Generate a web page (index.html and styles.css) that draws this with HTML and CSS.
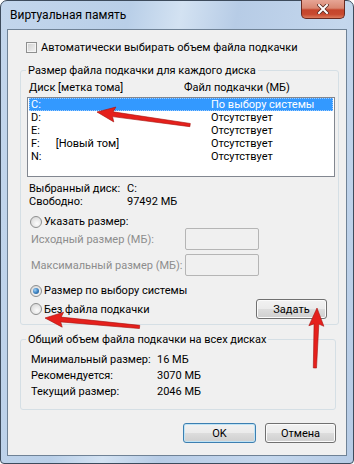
FILE: index.html
```html
<!DOCTYPE html>
<html lang="ru">
<head>
    <meta charset="UTF-8">
    <title>Виртуальная память</title>
    <link rel="stylesheet" href="styles.css">
</head>
<body>
    <div class="stage">
        <div class="window">
            <div class="titlebar">
                <span class="title">Виртуальная память</span>
                <span class="close">
                    <svg width="12" height="10" viewBox="0 0 12 10">
                        <path d="M2 1 L10 9 M10 1 L2 9" stroke="#5a2a22" stroke-width="3.6" stroke-linecap="square"/>
                        <path d="M2 1 L10 9 M10 1 L2 9" stroke="#fff" stroke-width="2" stroke-linecap="square"/>
                    </svg>
                </span>
            </div>
            <div class="client">
                <div class="check-row"><span class="checkbox"></span>Автоматически выбирать объем файла подкачки</div>

                <fieldset class="group group-drives">
                    <legend>Размер файла подкачки для каждого диска</legend>
                    <div class="list-head">
                        <span class="col-disk">Диск [метка тома]</span>
                        <span>Файл подкачки (МБ)</span>
                    </div>
                    <div class="listbox">
                        <div class="row selected"><span class="c-disk">C:</span><span>По выбору системы</span></div>
                        <div class="row"><span class="c-disk">D:</span><span>Отсутствует</span></div>
                        <div class="row"><span class="c-disk">E:</span><span>Отсутствует</span></div>
                        <div class="row"><span class="c-disk">F:<span class="label">[Новый том]</span></span><span>Отсутствует</span></div>
                        <div class="row"><span class="c-disk">N:</span><span>Отсутствует</span></div>
                    </div>
                    <div class="info">
                        <div class="info-row"><span class="info-label">Выбранный диск:</span><span>C:</span></div>
                        <div class="info-row"><span class="info-label">Свободно:</span><span>97492 МБ</span></div>
                    </div>
                    <div class="radio-row first"><span class="radio"></span>Указать размер:</div>
                    <div class="size-row"><span class="size-label">Исходный размер (МБ):</span><span class="textbox"></span></div>
                    <div class="size-row"><span class="size-label">Максимальный размер (МБ):</span><span class="textbox"></span></div>
                    <div class="radio-row system"><span class="radio checked"></span>Размер по выбору системы</div>
                    <div class="set-row">
                        <div class="radio-row"><span class="radio"></span>Без файла подкачки</div>
                        <button class="btn btn-set">Задать</button>
                    </div>
                </fieldset>

                <fieldset class="group group-total">
                    <legend>Общий объем файла подкачки на всех дисках</legend>
                    <div class="total-row"><span class="total-label">Минимальный размер:</span><span>16 МБ</span></div>
                    <div class="total-row"><span class="total-label">Рекомендуется:</span><span>3070 МБ</span></div>
                    <div class="total-row"><span class="total-label">Текущий размер:</span><span>2046 МБ</span></div>
                </fieldset>

                <div class="buttons">
                    <button class="btn btn-ok">OK</button>
                    <button class="btn btn-cancel">Отмена</button>
                </div>
            </div>
        </div>

        <svg class="arrows" width="354" height="464" viewBox="0 0 354 464">
            <polygon class="arrow" transform="translate(97 112) rotate(188)"
                     points="-94,-1.6 -16,-2.4 -18,-7.5 0,0 -18,7.5 -16,2.4 -94,1.6"/>
            <polygon class="arrow" transform="translate(45 318) rotate(185.4)"
                     points="-95,-1.6 -16,-2.4 -18,-7.5 0,0 -18,7.5 -16,2.4 -95,1.6"/>
            <polygon class="arrow" transform="translate(317 308) rotate(-88)"
                     points="-60,-1.6 -16,-2.4 -18,-7.5 0,0 -18,7.5 -16,2.4 -60,1.6"/>
        </svg>
    </div>
</body>
</html>
```

FILE: styles.css
```css
* {
    box-sizing: border-box;
}
body {
    margin: 0;
    font-family: Roboto, "Noto Sans", sans-serif;
    font-size: 11px;
    color: #000;
    white-space: nowrap;
}
.stage {
    position: relative;
    width: 354px;
    height: 464px;
}
.window {
    width: 354px;
    height: 464px;
    border: 1px solid #3d4b5c;
    border-radius: 7px 7px 4px 4px;
    background: linear-gradient(100deg, #c3d6ec 0%, #b9cfe8 30%, #d3e2f2 42%, #b7cce6 55%, #c4d7ed 80%, #b6cbe5 100%);
}
.titlebar {
    height: 28px;
    display: flex;
    justify-content: space-between;
    align-items: flex-start;
    padding: 0 8px 0 9px;
}
.title {
    line-height: 28px;
    font-size: 12px;
}
.close {
    width: 44px;
    height: 19px;
    margin-top: -1px;
    border: 1px solid #6a2a20;
    border-top: none;
    border-radius: 0 0 5px 5px;
    background: linear-gradient(#e6a595 0%, #d98772 45%, #c5452c 55%, #c84a30 80%, #dc7a5c 100%);
    display: flex;
    align-items: center;
    justify-content: center;
}
.client {
    margin: 0 6px;
    height: 427px;
    border: 1px solid #6f8296;
    background: #f0f0f0;
}
.check-row {
    margin-top: 11px;
    height: 13px;
    padding-left: 18px;
    display: flex;
    align-items: center;
    gap: 4px;
    line-height: 13px;
}
.checkbox {
    flex-shrink: 0;
    width: 11px;
    height: 11px;
    border: 1px solid #8e8f8f;
    background: linear-gradient(135deg, #cfcfcf, #f4f4f4);
    box-shadow: inset 0 0 0 1px #f4f4f4;
}
.group {
    margin: 10px 7px 0 12px;
    padding: 0;
    border: 1px solid #d5dfe5;
    border-radius: 3px;
    min-width: 0;
}
.group legend {
    margin-left: 5px;
    padding: 0 2px;
    line-height: 13px;
}
.list-head {
    margin-top: 4px;
    padding-left: 8px;
    line-height: 13px;
    display: flex;
}
.col-disk {
    width: 155px;
}
.listbox {
    margin: 3px 0 0 6px;
    width: 308px;
    height: 80px;
    border: 1px solid #828790;
    background: #fff;
}
.row {
    height: 13px;
    line-height: 13px;
    padding-left: 3px;
    display: flex;
}
.row.selected {
    margin: 0 1px;
    padding-left: 2px;
    background: #3399ff;
    color: #fff;
    outline: 1px dotted #9fccff;
    outline-offset: -1px;
}
.c-disk {
    width: 180px;
}
.label {
    margin-left: 16px;
}
.info {
    margin-top: 5px;
    padding-left: 8px;
}
.info-row {
    line-height: 13px;
    display: flex;
}
.info-label {
    width: 98px;
}
.radio-row {
    height: 13px;
    padding-left: 9px;
    display: flex;
    align-items: center;
    gap: 2px;
    line-height: 13px;
}
.radio-row.first {
    margin-top: 7px;
}
.radio-row.system {
    margin-top: 8px;
}
.radio {
    flex-shrink: 0;
    width: 12px;
    height: 12px;
    border: 1px solid #8e8f8f;
    border-radius: 50%;
    background: radial-gradient(circle at 60% 65%, #fcfcfc 0%, #e2e2e2 60%, #cfcfcf 100%);
    display: flex;
    align-items: center;
    justify-content: center;
}
.radio.checked::after {
    content: "";
    width: 6px;
    height: 6px;
    border-radius: 50%;
    background: radial-gradient(circle at 35% 35%, #9fd0f5 0%, #3d83c2 50%, #1c4d80 100%);
}
.size-row {
    height: 22px;
    margin-bottom: 4px;
    padding-left: 10px;
    display: flex;
    align-items: center;
    color: #8d8d8d;
}
.size-label {
    width: 154px;
    flex-shrink: 0;
}
.textbox {
    flex-shrink: 0;
    width: 74px;
    height: 22px;
    border: 1px solid #b5b5b5;
    border-radius: 2px;
    background: #f0f0f0;
}
.set-row {
    margin-top: 2px;
    height: 20px;
    padding-right: 11px;
    margin-bottom: 5px;
    display: flex;
    align-items: center;
    justify-content: space-between;
}
.btn {
    height: 20px;
    padding: 0;
    border: 1px solid #707070;
    border-radius: 3px;
    background: linear-gradient(#f2f2f2 0%, #ebebeb 50%, #dddddd 51%, #cfcfcf 100%);
    box-shadow: inset 0 0 0 1px #fbfbfb;
    font: inherit;
    color: #000;
}
.btn-set {
    width: 71px;
}
.group-total {
    margin: 8px 10px 0 12px;
    padding-bottom: 9px;
}
.total-row {
    height: 16px;
    line-height: 16px;
    padding-left: 10px;
    display: flex;
}
.group-total legend + .total-row {
    margin-top: 6px;
}
.total-label {
    width: 126px;
}
.buttons {
    margin-top: 13px;
    padding-right: 10px;
    display: flex;
    justify-content: flex-end;
    gap: 9px;
}
.btn-ok {
    width: 73px;
    border-color: #3c7fb1;
    box-shadow: inset 0 0 0 1px #bfe3f5;
}
.btn-cancel {
    width: 71px;
}
.arrows {
    position: absolute;
    top: 0;
    left: 0;
    pointer-events: none;
}
.arrow {
    fill: #e5201c;
    stroke: #a81410;
    stroke-width: 0.6;
}
```
